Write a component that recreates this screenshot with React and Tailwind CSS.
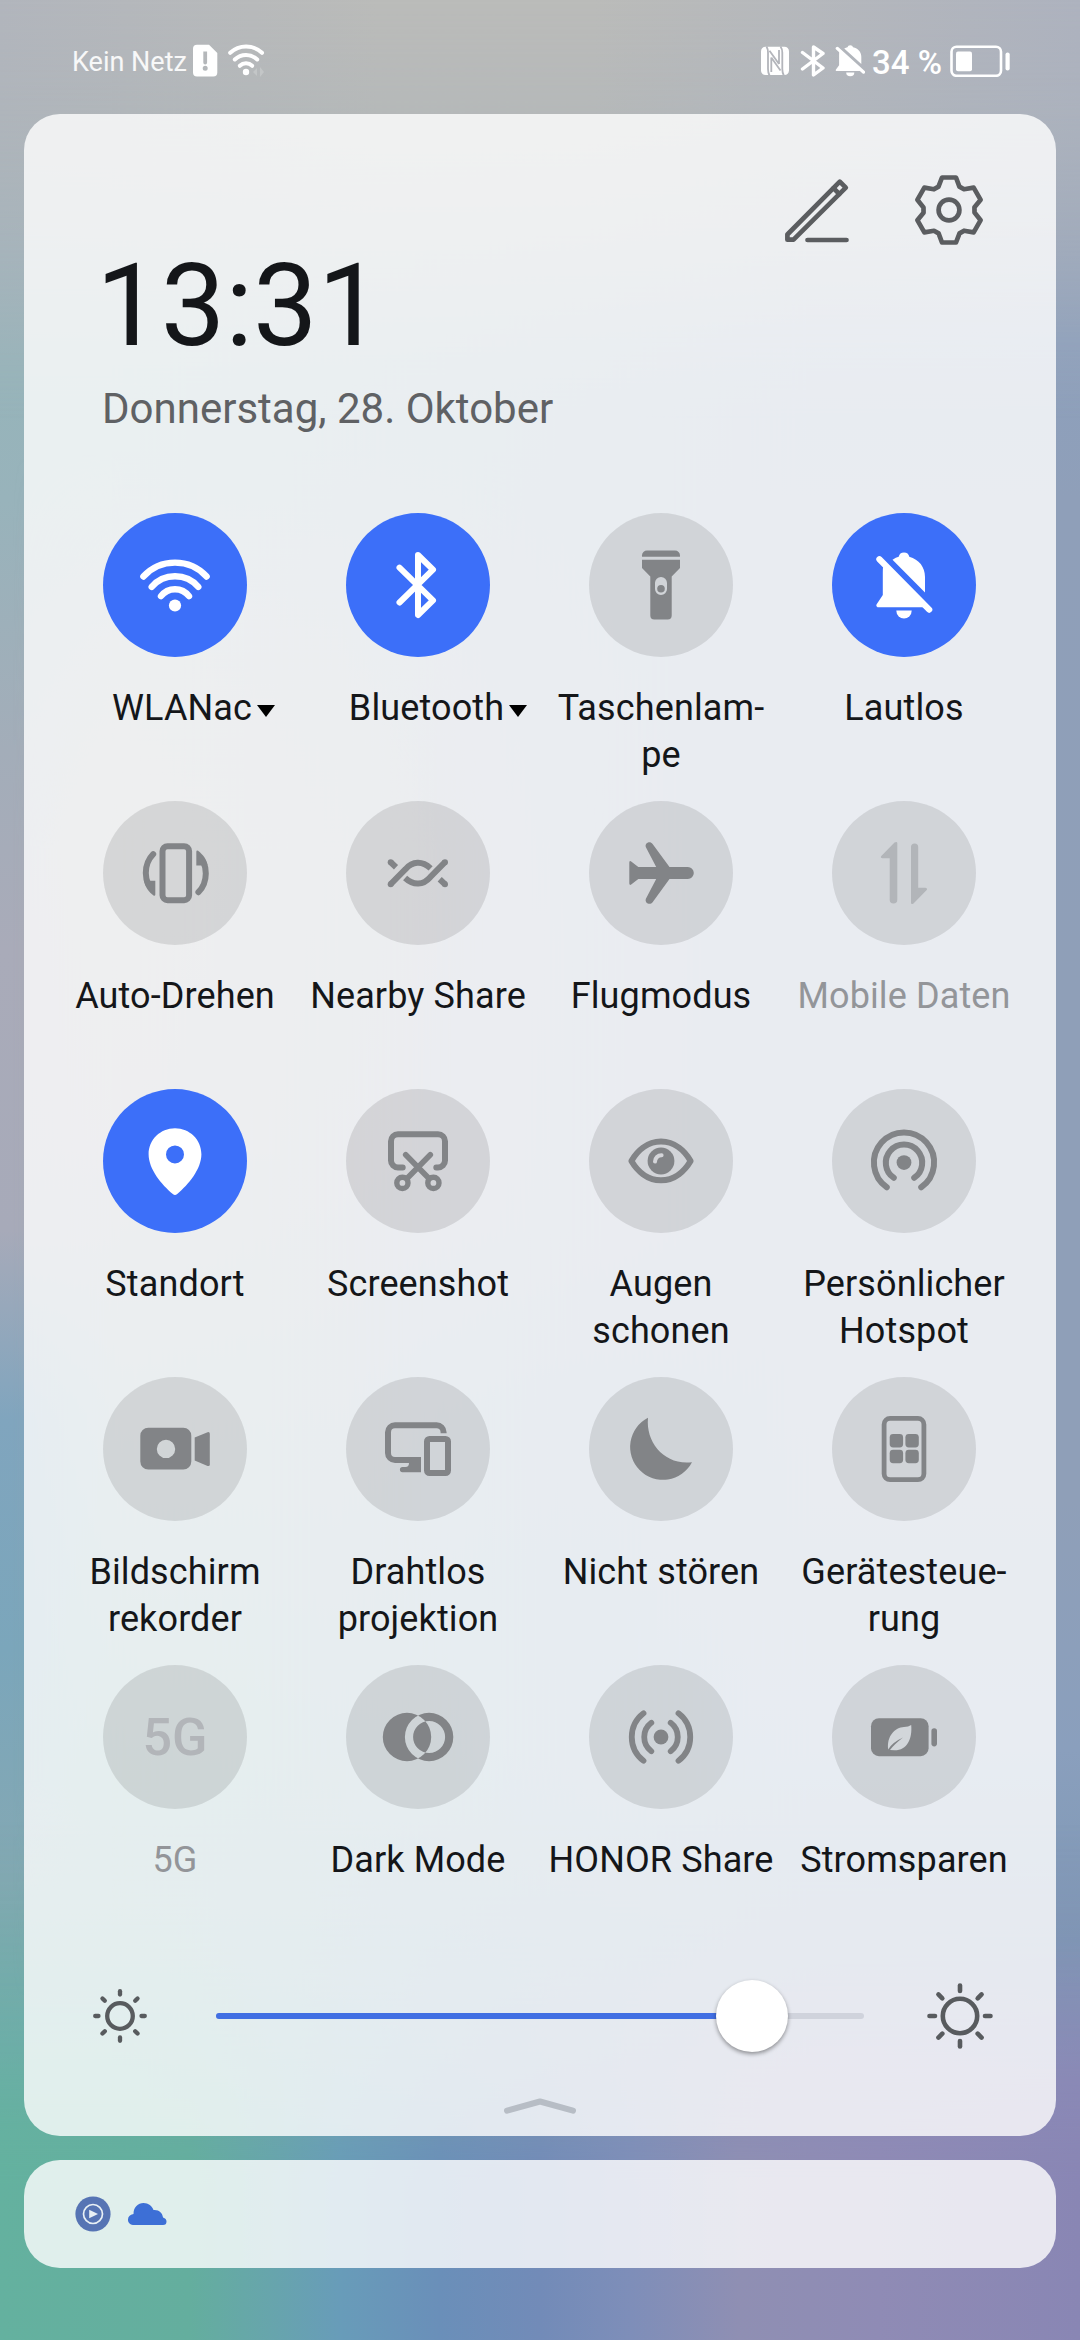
import React from "react";

const line = {
  fill: "none",
  stroke: "currentColor",
  strokeWidth: 6,
  strokeLinecap: "round",
  strokeLinejoin: "round",
};

const icons = {
  wifi: (
    <>
      <g {...line} strokeWidth={6.4}>
        <path d="M40.4 63.5A43 43 0 0 1 103.6 63.5" />
        <path d="M48.7 73.8A31 31 0 0 1 95.3 73.8" />
        <path d="M58 83.2A17.5 17.5 0 0 1 86 83.2" />
      </g>
      <circle cx="72" cy="92.5" r="6.1" />
    </>
  ),
  bluetooth: (
    <path {...line} d="M53.5 54.7L87 87.3L72 102V42L87 56.7L53.5 89.5" />
  ),
  flashlight: (
    <>
      <path d="M53 43.8V42.5a5 5 0 0 1 5-5H86a5 5 0 0 1 5 5v1.3z" />
      <path
        fillRule="evenodd"
        d="M53 46.8H91V55L82.7 63.5V102.5a4 4 0 0 1-4 4H65.3a4 4 0 0 1-4-4V63.5L53 55zM72 64a6 6 0 0 0-6 6v6a6 6 0 0 0 12 0v-6a6 6 0 0 0-6-6z"
      />
      <circle cx="72" cy="75.8" r="3.8" />
    </>
  ),
  bellOff: (
    <>
      <path d="M60.5 46.8Q64 44.5 66.7 43.8A5.4 5.4 0 0 1 77.3 43.8C87 46.5 93 54 93 64V79.6z" />
      <path d="M51.3 52.3L92.5 94.2H45.5Q43.6 93.3 44.5 91.5L50.8 82V60Q50.8 55 51.3 52.3z" />
      <path d="M64.3 97.5H79.7A7.7 8 0 0 1 64.3 97.5z" />
      <path {...line} strokeWidth={6.2} d="M47.4 46.3L97.2 96.6" />
    </>
  ),
  rotate: (
    <>
      <rect {...line} x="59.5" y="45.2" width="26.6" height="54" rx="5" />
      {["rotate(0)", "rotate(180 72.8 72.2)"].map((t) => (
        <g key={t} transform={t}>
          <path {...line} d="M50.2 53.2C45 58.5 42.8 65 42.8 72C42.8 76 43.6 80 45.4 83.5" />
          <path d="M52.3 79.8V93.5Q52.2 95.3 50.5 94.6C45.5 90.5 42 86 40.9 79.8z" />
        </g>
      ))}
    </>
  ),
  nearby: (
    <>
      <path {...line} strokeLinecap="butt" d="M44.7 83.2L59.5 68.2C66.5 60.2 76 59.5 84.600 67.400" />
      <path {...line} strokeLinecap="butt" d="M99 61.2L84.2 76.2C77.2 84.2 67.700 84.900 59.100 77" />
      <path {...line} strokeLinecap="butt" d="M44.7 61.2L50 66.2M99 83.2L93.7 78.2" />
      <circle cx="44.7" cy="61.2" r="3" />
      <circle cx="99" cy="83.2" r="3" />
      <circle cx="44.7" cy="83.2" r="3" />
      <circle cx="99" cy="61.2" r="3" />
    </>
  ),
  plane: (
    <path d="M40.3 61.4Q40.5 59.4 42.2 60.4L49.3 66H67.2L56.9 46.3C55.3 42.2 60.8 39.2 63.6 42.9L80.5 66H98.8A6 6 0 0 1 98.8 78H80.5L63.6 101.3C60.8 104.8 55.3 101.8 56.9 97.7L67.2 78H49.3L42.2 83.6Q40.5 84.6 40.3 82.6z" />
  ),
  data: (
    <>
      <path d="M65.3 42V98.7a3.8 3.8 0 0 1-7.6 0V57.2H50.5Q48 56.5 49.3 54.9L62.5 41.6Q65 40.2 65.3 42z" />
      <path d="M79 102V46a3.6 3.6 0 0 1 7.2 0V86.8H93.5Q96 87.5 94.7 89.1L81.5 102.4Q79.3 103.8 79 102z" />
    </>
  ),
  pin: (
    <path
      fillRule="evenodd"
      d="M72 39.2C86.6 39.2 98.4 50.6 98.4 65.2C98.4 80 85.5 95.5 74.2 105Q72 106.8 69.8 105C58.5 95.5 45.6 80 45.6 65.2C45.6 50.6 57.4 39.2 72 39.2zM72 56.4a9 9 0 1 0 0 18a9 9 0 1 0 0-18z"
    />
  ),
  screenshot: (
    <g {...line}>
      <path d="M56.7 78.4H52A7 7 0 0 1 45 71.4V52.2A7 7 0 0 1 52 45.2H92A7 7 0 0 1 99 52.2V71.4A7 7 0 0 1 92 78.4H90.3" />
      <path strokeWidth="5.6" d="M59.7 65.8L83 89.5M84.3 65.8L61 89.5" />
      <circle cx="56.4" cy="93.9" r="5.6" strokeWidth="5.4" />
      <circle cx="87.4" cy="93.9" r="5.6" strokeWidth="5.4" />
    </g>
  ),
  eye: (
    <>
      <path {...line} d="M42.4 72C48 62.5 58 52.6 72 52.6S96 62.5 101.6 72C96 81.5 86 91.3 72 91.3S48 81.5 42.4 72z" />
      <circle cx="72" cy="72" r="13.4" />
      <path d="M66 72.6A6.5 6.5 0 0 1 72.6 66.2" fill="none" stroke="#d4d5d9" strokeWidth="4" strokeLinecap="round" />
    </>
  ),
  hotspot: (
    <>
      <circle cx="72" cy="73.6" r="7.4" />
      <path {...line} d="M61.8 88.8A18.2 18.2 0 1 1 82.2 88.8" />
      <path {...line} d="M54.8 98.3A30.1 30.1 0 1 1 89.2 98.3" />
    </>
  ),
  recorder: (
    <>
      <path
        fillRule="evenodd"
        d="M45.3 50.7H80.3a8 8 0 0 1 8 8V84.5a8 8 0 0 1-8 8H45.3a8 8 0 0 1-8-8V58.7a8 8 0 0 1 8-8zM63 62.7a9.2 9.2 0 1 0 0 18.4a9.2 9.2 0 1 0 0-18.4z"
      />
      <path d="M91.7 60.6L104.6 55.2Q106.8 54.6 106.8 56.8V87.4Q106.8 89.6 104.6 88.9L91.7 83.5z" />
    </>
  ),
  cast: (
    <>
      <path {...line} strokeLinecap="butt" d="M97.6 56.2V55.2A7 7 0 0 0 90.6 48.2H49A7 7 0 0 0 42 55.2V76A7 7 0 0 0 49 83H75" />
      <path d="M66 80H75V95.2H56.5A2.6 2.6 0 0 1 56.5 90H59.5Q63 90 63 86V84z" />
      <rect {...line} x="81" y="62" width="21" height="34" rx="2.5" />
    </>
  ),
  moon: (
    <path d="M59 40.8C56.5 66 76 88.6 103 85.2A32.8 32.8 0 1 1 59 40.8z" />
  ),
  devices: (
    <>
      <rect {...line} strokeWidth="4.8" x="52.1" y="41.4" width="39.8" height="61.3" rx="6" />
      <rect x="57.7" y="57" width="13.4" height="13.4" rx="3.4" />
      <rect x="73.4" y="57" width="13.4" height="13.4" rx="3.4" />
      <rect x="57.7" y="72.8" width="13.4" height="13.4" rx="3.4" />
      <rect x="73.4" y="72.8" width="13.4" height="13.4" rx="3.4" />
    </>
  ),
  darkMode: (
    <path
      fillRule="evenodd"
      d="M61 47.8a24.2 24.2 0 1 0 0 48.4a24.2 24.2 0 1 0 0-48.4zM83.1 47.8a24.2 24.2 0 1 0 0 48.4a24.2 24.2 0 1 0 0-48.4zM83.1 56a16 16 0 1 0 0 32a16 16 0 1 0 0-32z"
    />
  ),
  share: (
    <>
      <circle cx="72" cy="72" r="7.4" />
      <g {...line} strokeWidth="5.8">
        <path d="M62.3 57.8A17.8 17.8 0 0 0 62.3 86.2" />
        <path d="M81.7 57.8A17.8 17.8 0 0 1 81.7 86.2" />
        <path d="M54.5 48.2A30 30 0 0 0 54.5 95.8" />
        <path d="M89.5 48.2A30 30 0 0 1 89.5 95.8" />
      </g>
    </>
  ),
  battery: (
    <>
      <rect x="39" y="53.2" width="57.6" height="38" rx="8" />
      <rect x="99.4" y="63.2" width="5.6" height="18.2" rx="2.8" />
      <path fill="#d2d6da" d="M79.2 60C80.5 74 75 85.5 62.5 85.3L58 85Q62 79.5 71 72.5Q60 77.5 56.2 84.5C54.5 71 63 62.5 72 62Q76.5 61.8 79.2 60z" />
    </>
  ),
};

const tiles = [
  { icon: "wifi", label: ["WLANac"], state: "on", menu: "pl-[37px]" },
  { icon: "bluetooth", label: ["Bluetooth"], state: "on", menu: "pl-[40px]" },
  { icon: "flashlight", label: ["Taschenlam-", "pe"] },
  { icon: "bellOff", label: ["Lautlos"], state: "on" },
  { icon: "rotate", label: ["Auto-Drehen"] },
  { icon: "nearby", label: ["Nearby Share"] },
  { icon: "plane", label: ["Flugmodus"] },
  { icon: "data", label: ["Mobile Daten"], state: "disabled" },
  { icon: "pin", label: ["Standort"], state: "on" },
  { icon: "screenshot", label: ["Screenshot"] },
  { icon: "eye", label: ["Augen", "schonen"] },
  { icon: "hotspot", label: ["Persönlicher", "Hotspot"] },
  { icon: "recorder", label: ["Bildschirm", "rekorder"] },
  { icon: "cast", label: ["Drahtlos", "projektion"] },
  { icon: "moon", label: ["Nicht stören"] },
  { icon: "devices", label: ["Gerätesteue-", "rung"] },
  { text: "5G", label: ["5G"], state: "disabled" },
  { icon: "darkMode", label: ["Dark Mode"] },
  { icon: "share", label: ["HONOR Share"] },
  { icon: "battery", label: ["Stromsparen"] },
];

const circleStyle = {
  on: "bg-[#3c6ff9] text-white",
  off: "bg-black/10 text-[#828487]",
  disabled: "bg-black/10 text-[#b2b5b9]",
};

function Tile({ icon, text, label, state = "off", menu }) {
  return (
    <button className="flex h-[288px] flex-col items-center">
      <span className={`flex size-36 shrink-0 items-center justify-center rounded-full ${circleStyle[state]}`}>
        {icon ? (
          <svg viewBox="0 0 144 144" className="size-36" fill="currentColor">
            {icons[icon]}
          </svg>
        ) : (
          <span className="pt-0.5 text-[52px] leading-none font-medium">{text}</span>
        )}
      </span>
      <span
        className={`mt-[28px] flex items-center text-[36px] leading-[47px] tracking-[0.12px] whitespace-nowrap ${
          state === "disabled" ? "text-[#939599]" : "text-[#141619]"
        } ${menu || ""}`}
      >
        <span>
          {label.map((l) => (
            <span key={l} className="block text-center">
              {l}
            </span>
          ))}
        </span>
        {menu && (
          <svg viewBox="0 0 18 12" className="mt-1 ml-[5px] h-3 w-[18px]" fill="#000">
            <path d="M0 0H18L9 12z" />
          </svg>
        )}
      </span>
    </button>
  );
}

function Sun({ r, from, to, width }) {
  return (
    <svg viewBox="-36 -36 72 72" className="size-[72px] shrink-0 text-[#585b5e]" {...line} strokeWidth={width}>
      <circle r={r} />
      {[0, 45, 90, 135, 180, 225, 270, 315].map((a) => (
        <path key={a} transform={`rotate(${a})`} d={`M0 ${-from}V${-to}`} />
      ))}
    </svg>
  );
}

const gearOutline = [0, 60, 120, 180, 240, 300]
  .flatMap((deg) => {
    const a = (deg * Math.PI) / 180;
    return [[-7, -32.5], [7, -32.5], [10.4, -23.4], [15, -20.8]].map(
      ([x, y]) => `${x * Math.cos(a) - y * Math.sin(a)},${x * Math.sin(a) + y * Math.cos(a)}`
    );
  })
  .join(" ");

function StatusBar() {
  return (
    <div className="flex h-[114px] items-start justify-between pr-[70px] pl-[72px] text-white">
      <div className="flex pt-[44px]">
        <span className="h-8 w-[121px] text-[27px] leading-[36px] whitespace-nowrap text-white/90">Kein Netz</span>
        <svg viewBox="0 0 26 33" className="h-[33px] w-[26px]" fill="currentColor">
          <path
            fillRule="evenodd"
            d="M4 .8H16L24.3 9V28.5a4 4 0 0 1-4 4H4a4 4 0 0 1-4-4V4.800a4 4 0 0 1 4-4zM10.300 7.500V18.500a1.900 1.900 0 0 0 3.800 0V7.500zM12.200 21.800a2.500 2.500 0 1 0 0 5a2.500 2.500 0 1 0 0-5z"
          />
        </svg>
        <svg viewBox="0 0 38 36" className="ml-[9px] h-[36px] w-[38px]" fill="currentColor">
          <g {...line} strokeWidth="4">
            <path d="M2.200 8.800A23 23 0 0 1 34 8.800" />
            <path d="M6.800 15.500A16 16 0 0 1 29.200 15.500" />
            <path d="M11.800 21.800A9 9 0 0 1 24.200 21.800" />
          </g>
          <circle cx="18" cy="28" r="3.200" />
          <path opacity=".2" d="M25 28l4-4v8zM36 28l-4-5v10z" />
        </svg>
      </div>
      <div className="flex pt-[44px]">
        <svg viewBox="0 0 28 33" className="h-[33px] w-[28px]" fill="currentColor">
          <rect y="2.700" width="28" height="28.300" rx="4.500" />
          <g fill="none" stroke="#b3b5bb" strokeWidth="1.800" strokeLinejoin="round">
            <path d="M5.500 2.500Q7 5 7 8.500V25Q7 28.500 8.500 31.500" />
            <path d="M10.300 13.500V28M10.300 13.500L19.500 26.500" />
            <path d="M18 6V20M18 20L8.500 6.800" />
            <path d="M19.500 2.500Q21.300 5 21.300 8.500V25Q21.300 28.500 22.800 31.500" />
          </g>
        </svg>
        <svg viewBox="0 0 26 33" className="ml-[11px] h-[33px] w-[26px]" {...line} strokeWidth="3.400">
          <path d="M2.500 8.500L23 24L13.500 31V3L23 9.500L2.500 25" />
        </svg>
        <svg viewBox="43 37 57 70" className="ml-[9px] h-[33px] w-[30px]" preserveAspectRatio="none" fill="currentColor">
          {icons.bellOff}
        </svg>
        <span className="ml-[7px] w-[78px] text-[33px] leading-[38px] font-medium whitespace-nowrap">34 %</span>
        <svg viewBox="0 0 60 33" className="h-[33px] w-[60px]" fill="currentColor">
          <rect x="1.500" y="2.800" width="49.500" height="29" rx="5" fill="none" stroke="currentColor" strokeWidth="2.600" />
          <rect x="6" y="7.500" width="16" height="19.800" rx="2" />
          <rect x="55.500" y="8.500" width="4.200" height="18" rx="2" />
        </svg>
      </div>
    </div>
  );
}

function Wallpaper() {
  return (
    <div className="absolute inset-0">
      <div className="absolute inset-0 bg-[linear-gradient(to_bottom,#b1b5bc_0px,#a9b4b8_110px,#9fb3bb_250px,#96b4ba_370px,#98b3bb_500px,#a3adb9_750px,#a9abb9_950px,#a7aab9_1230px,#80a5be_1420px,#7ba6bb_1650px,#84a8b3_1880px,#70adab_2050px,#65b2a0_2170px,#62b09f_2340px)]" />
      <div className="absolute inset-y-0 left-0 w-[620px] bg-[linear-gradient(to_bottom,transparent_450px,#adb0b2_850px,#a9acb6_1150px,#90abb4_1500px,#7dabac_1780px,transparent_2000px)] [mask-image:linear-gradient(to_right,transparent_2%,black_20%,black_55%,transparent)]" />
      <div className="absolute inset-0 bg-[linear-gradient(to_bottom,#adb2be_0px,#a7b1bb_110px,#9ba8ba_220px,#8da0bc_340px,#8f9fb9_500px,#8f9fb8_1000px,#8f9fb8_1500px,#8a9fbd_1750px,#7e98b5_1940px,#8b8cb8_2080px,#8a87b8_2180px,#8a87b1_2340px)] [mask-image:linear-gradient(to_right,transparent_10%,black_75%)]" />
      <div className="absolute inset-x-0 top-0 h-[420px] bg-[linear-gradient(to_right,#b1b5bc_0%,#babbb9_35%,#babbb9_55%,#adb2be_100%)] [mask-image:linear-gradient(to_bottom,black,transparent)]" />
      <div className="absolute inset-x-0 bottom-0 h-[520px] bg-[linear-gradient(to_right,#64b19f_0px,#64ae9e_190px,#67a5ac_270px,#689cb9_340px,#6a8fb9_440px,#728bb8_540px,#7e8eb9_630px,#8f8fb3_740px,#8f8bb5_880px,#8986b4_1080px)] [mask-image:linear-gradient(to_bottom,transparent,rgba(0,0,0,0.3)_45%,black_70%)]" />
    </div>
  );
}

export default function App() {
  return (
    <div className="relative h-[2340px] w-[1080px] overflow-hidden font-['Roboto',sans-serif]">
      <Wallpaper />
      <div className="relative flex h-full flex-col">
        <StatusBar />

        <main className="mx-6 flex h-[2022px] flex-col rounded-[36px] bg-white/80">
          <header className="h-[399px] pt-[60px] pr-[71px] pl-[72px]">
            <div className="flex h-[74px] justify-end gap-[62px] text-[#5b5d60]">
              <svg viewBox="780 174 70 72" className="h-[72px] w-[70px]" {...line} strokeWidth="4.700">
                <path d="M786.400 234.500L838.800 181.700L844.800 187.700L792.500 239.700H786.400z" />
                <path d="M832.500 188.200L838.300 194M806.500 240H845.500" />
              </svg>
              <svg viewBox="-36 -36 72 72" className="size-[72px]" {...line} strokeWidth="4.700">
                <polygon points={gearOutline} />
                <circle r="10.400" />
              </svg>
            </div>
            <div className="text-[115px] leading-[115px] text-[#141619]">13:31</div>
            <div className="mt-[25px] pl-[6px] text-[42px] leading-[42px] text-[#5f6164]">Donnerstag, 28. Oktober</div>
          </header>

          <section className="grid w-[1001.5px] grid-cols-4 pl-[29.5px]">
            {tiles.map((t) => (
              <Tile key={t.label[0]} {...t} />
            ))}
          </section>

          <section className="mt-[27px] flex items-center justify-between px-[60px]">
            <Sun r={12.8} from={21.5} to={24.800} width={4.300} />
            <div className="relative h-[6px] w-[648px] rounded-full bg-[#d0d3dc]">
              <div className="h-full w-[536px] rounded-full bg-[#416fe3]" />
              <div className="absolute top-[-33px] left-[500px] size-[72px] rounded-full bg-white shadow-[0_2px_4px_rgba(0,0,0,0.4)]" />
            </div>
            <Sun r={17.2} from={25} to={30.500} width={4.600} />
          </section>

          <svg viewBox="0 0 72 18" className="mt-[45px] h-[18px] w-[72px] self-center text-[#b7bdc5]" {...line}>
            <path d="M3 13.700L36 4.500L69 13.700" />
          </svg>
        </main>

        <section className="mx-6 mt-6 flex h-[108px] items-center rounded-[36px] bg-white/80 pl-[51px]">
          <svg viewBox="-18 -18 36 36" className="size-9">
            <circle r="17.600" fill="#5674b4" />
            <circle r="9.500" fill="none" stroke="#e8f0f5" strokeWidth="1.700" />
            <path d="M-3.800 -4.200L5 0L-3.800 4.200z" fill="#e8f0f5" />
          </svg>
          <svg viewBox="0 0 39 22" className="ml-[17px] h-[22px] w-[39px]" fill="#3d6fd6">
            <path d="M5 22a5 5 0 0 1-5-5.500Q0 12 5.500 11C5.500 4 10 0 15.500 0C20.500 0 24 3 25.500 7C31 6.500 34.500 10 35 14.500Q38.500 15.500 38.500 18.500Q38.500 22 35 22z" />
          </svg>
        </section>
      </div>
    </div>
  );
}
